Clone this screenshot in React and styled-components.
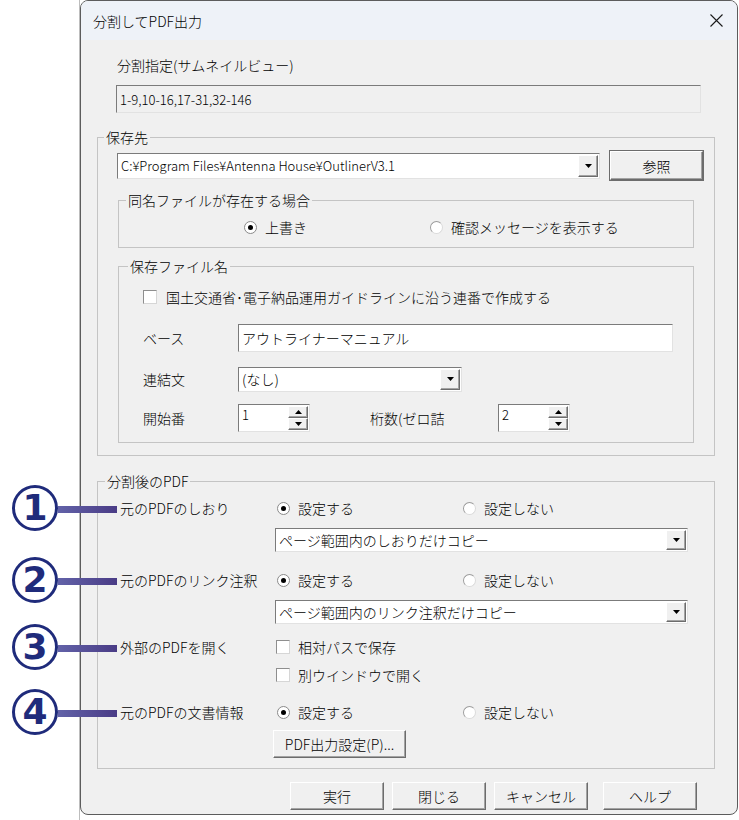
import styled, { createGlobalStyle } from 'styled-components';

const GlobalStyle = createGlobalStyle`
  html, body {
    margin: 0;
    padding: 0;
    background: #fff;
  }
  body {
    font-family: "Noto Sans CJK JP", "Noto Sans", sans-serif;
    font-size: 14px;
    font-weight: 300;
    color: #000;
  }
  * {
    box-sizing: border-box;
  }
`;

const Page = styled.div`
  display: flex;
  width: 739px;
  height: 820px;
`;

const Gutter = styled.div`
  width: 80px;
  flex-shrink: 0;
  border-right: 1px solid #bdbdbd;
`;

const Dialog = styled.div`
  width: 658px;
  align-self: flex-start;
  border: 1px solid #5c5c5c;
  border-radius: 8px;
  background: #f0f0f0;
  display: flex;
  flex-direction: column;
`;

const TitleBar = styled.div`
  height: 39px;
  background: #eef2f8;
  border-radius: 7px 7px 0 0;
  display: flex;
  align-items: center;
  justify-content: space-between;
  padding: 0 14px 0 12px;
  line-height: 20px;
`;

const Body = styled.div`
  padding: 15px 22px 4px 16px;
`;

const SectionLabel = styled.div`
  line-height: 20px;
  margin-left: 20px;
`;

const sunken = `
  border: 1px solid;
  border-color: #7b7b7b #e2e2e2 #e2e2e2 #7b7b7b;
`;

const raised = `
  border: 1px solid;
  border-color: #ffffff #6c6c6c #6c6c6c #ffffff;
  box-shadow: inset -1px -1px 0 #a3a3a3;
  background: #f0f0f0;
`;

const ReadonlyField = styled.div`
  ${sunken}
  margin: 10px 0 0 19px;
  width: 585px;
  height: 28px;
  background: #f0f0f0;
  font-size: 13px;
  padding-left: 3px;
  display: flex;
  align-items: center;
`;

const Group = styled.fieldset`
  margin: ${p => p.$mt || 0}px 0 0 ${p => p.$ml || 0}px;
  padding: 0;
  border: 1px solid #c4c4c4;
  min-width: 0;
`;

const Legend = styled.legend`
  margin-left: ${p => p.$ml}px;
  padding: 0 2px;
  line-height: 18px;
  font-size: 14px;
`;

const Inner = styled.div`
  padding: ${p => p.$pad};
`;

const Row = styled.div`
  display: flex;
  align-items: center;
  height: ${p => p.$h || 20}px;
  margin-top: ${p => p.$mt || 0}px;
  padding-left: ${p => p.$pl || 0}px;
  gap: ${p => p.$gap || 0}px;
`;

const TextBox = styled.div`
  ${sunken}
  width: ${p => p.$w}px;
  height: ${p => p.$h}px;
  background: #fff;
  font-size: ${p => p.$fs || 14}px;
  padding-left: 3px;
  display: flex;
  align-items: center;
  white-space: nowrap;
`;

const ComboBox = styled.div`
  ${sunken}
  width: ${p => (p.$w ? `${p.$w}px` : '100%')};
  height: ${p => p.$h}px;
  flex-shrink: 0;
  background: #fff;
  display: flex;
  align-items: stretch;
  padding: 1px;
`;

const ComboText = styled.div`
  flex: 1;
  padding-left: 2px;
  font-size: ${p => p.$fs || 14}px;
  display: flex;
  align-items: center;
  white-space: nowrap;
  overflow: hidden;
`;

const DropButton = styled.div`
  ${raised}
  width: 20px;
  display: flex;
  align-items: center;
  justify-content: center;
`;

const Spin = styled.div`
  ${sunken}
  width: 72px;
  height: 28px;
  background: #fff;
  display: flex;
  padding: 1px;
  flex-shrink: 0;
`;

const SpinText = styled.div`
  flex: 1;
  padding: 0 0 0 2px;
  font-size: 13px;
  line-height: 18px;
`;

const SpinButtons = styled.div`
  width: 20px;
  display: flex;
  flex-direction: column;
`;

const SpinHalf = styled.div`
  ${raised}
  flex: 1;
  display: flex;
  align-items: center;
  justify-content: center;
`;

const PushButton = styled.div`
  ${raised}
  width: ${p => p.$w}px;
  height: ${p => p.$h || 28}px;
  margin-left: ${p => p.$ml || 0}px;
  display: flex;
  align-items: center;
  justify-content: center;
  font-size: 14px;
  outline: ${p => (p.$default ? '1px solid #6c6c6c' : 'none')};
  flex-shrink: 0;
`;

const Option = styled.div`
  display: flex;
  align-items: center;
  gap: 8px;
  width: ${p => (p.$w ? `${p.$w}px` : 'auto')};
  line-height: 20px;
  white-space: nowrap;
`;

const RadioDot = styled.span`
  width: 13px;
  height: 13px;
  border-radius: 50%;
  border: 1px solid;
  border-color: ${p => (p.$on ? '#8a8a8a' : '#9c9c9c #dadada #dadada #9c9c9c')};
  background: #fff;
  display: flex;
  align-items: center;
  justify-content: center;
  flex-shrink: 0;

  &::after {
    content: '';
    width: 5px;
    height: 5px;
    border-radius: 50%;
    background: ${p => (p.$on ? '#000' : 'transparent')};
  }
`;

const CheckBox = styled.span`
  width: 14px;
  height: 14px;
  border: 1px solid;
  border-color: #8e8e8e #d6d6d6 #d6d6d6 #8e8e8e;
  background: #fff;
  flex-shrink: 0;
`;

const FieldLabel = styled.div`
  width: ${p => p.$w}px;
  flex-shrink: 0;
  line-height: 20px;
  white-space: nowrap;
`;

const Setting = styled.div`
  display: flex;
  margin-top: ${p => p.$mt || 0}px;
`;

const SettingLabel = styled.div`
  position: relative;
  width: 155px;
  height: 20px;
  flex-shrink: 0;
  line-height: 20px;
  white-space: nowrap;
`;

const Controls = styled.div`
  flex: 1;
  display: flex;
  flex-direction: column;
  gap: ${p => p.$gap}px;
`;

const Callout = styled.span`
  position: absolute;
  right: calc(100% + 3px);
  top: 50%;
  transform: translateY(-50%);
  display: flex;
  align-items: center;
`;

const Badge = styled.span`
  width: 46px;
  height: 46px;
  border: 3px solid #1f2b7b;
  border-radius: 50%;
  background: #fff;
  color: #1f2b7b;
  font-family: "DejaVu Sans", "Liberation Sans", sans-serif;
  font-weight: 700;
  font-size: 36px;
  line-height: 1;
  display: flex;
  align-items: center;
  justify-content: center;
`;

const Leader = styled.span`
  width: 59px;
  height: 7px;
  margin-top: 3px;
  background: linear-gradient(to right, #6262a8, #4a3c86);
`;

const ButtonBar = styled.div`
  display: flex;
  justify-content: flex-end;
  gap: 8px;
  margin-top: 13px;
  padding-right: 18px;
`;

function Arrow({ up }) {
  return (
    <svg width="7" height="4" viewBox="0 0 7 4">
      <path d={up ? 'M0 4 L3.5 0 L7 4 Z' : 'M0 0 L7 0 L3.5 4 Z'} fill="#000" />
    </svg>
  );
}

function Combo({ text, w, h = 24, fs }) {
  return (
    <ComboBox $w={w} $h={h}>
      <ComboText $fs={fs}>{text}</ComboText>
      <DropButton>
        <Arrow />
      </DropButton>
    </ComboBox>
  );
}

function SpinBox({ value }) {
  return (
    <Spin>
      <SpinText>{value}</SpinText>
      <SpinButtons>
        <SpinHalf><Arrow up /></SpinHalf>
        <SpinHalf><Arrow /></SpinHalf>
      </SpinButtons>
    </Spin>
  );
}

function Radio({ label, on, w }) {
  return (
    <Option $w={w}>
      <RadioDot $on={on} />
      {label}
    </Option>
  );
}

function Check({ label, gap }) {
  return (
    <Option style={{ gap }}>
      <CheckBox />
      {label}
    </Option>
  );
}

function Marker({ n }) {
  return (
    <Callout>
      <Badge>{n}</Badge>
      <Leader />
    </Callout>
  );
}

function RadioPair() {
  return (
    <Row $pl={2}>
      <Radio label="設定する" on w={186} />
      <Radio label="設定しない" />
    </Row>
  );
}

export default function App() {
  return (
    <>
      <GlobalStyle />
      <Page>
        <Gutter />
        <Dialog>
          <TitleBar>
            <span>分割してPDF出力</span>
            <svg width="13" height="13" viewBox="0 0 13 13">
              <path d="M0.5 0.5 L12.5 12.5 M12.5 0.5 L0.5 12.5" stroke="#1a1a1a" strokeWidth="1.1" />
            </svg>
          </TitleBar>
          <Body>
            <SectionLabel>分割指定(サムネイルビュー)</SectionLabel>
            <ReadonlyField>1-9,10-16,17-31,32-146</ReadonlyField>

            <Group $mt={15}>
              <Legend $ml={6}>保存先</Legend>
              <Inner $pad="5px 20px 12px 19px">
                <Row $h={29} $gap={10}>
                  <Combo text="C:¥Program Files¥Antenna House¥OutlinerV3.1" w={483} h={26} fs={13} />
                  <PushButton $w={93} $h={29} $default>参照</PushButton>
                </Row>

                <Group $mt={11} $ml={1}>
                  <Legend $ml={7}>同名ファイルが存在する場合</Legend>
                  <Inner $pad="8px 0 10px 125px">
                    <Row>
                      <Radio label="上書き" on w={186} />
                      <Radio label="確認メッセージを表示する" />
                    </Row>
                  </Inner>
                </Group>

                <Group $mt={9} $ml={1}>
                  <Legend $ml={9}>保存ファイル名</Legend>
                  <Inner $pad="12px 20px 10px 24px">
                    <Row>
                      <Check label="国土交通省･電子納品運用ガイドラインに沿う連番で作成する" gap={9} />
                    </Row>
                    <Row $h={28} $mt={17}>
                      <FieldLabel $w={95}>ベース</FieldLabel>
                      <TextBox $w={435} $h={28}>アウトライナーマニュアル</TextBox>
                    </Row>
                    <Row $h={26} $mt={14}>
                      <FieldLabel $w={95}>連結文</FieldLabel>
                      <Combo text="(なし)" w={224} h={25} />
                    </Row>
                    <Row $h={28} $mt={12}>
                      <FieldLabel $w={95}>開始番</FieldLabel>
                      <SpinBox value="1" />
                      <FieldLabel $w={128} style={{ marginLeft: 60 }}>桁数(ゼロ詰</FieldLabel>
                      <SpinBox value="2" />
                    </Row>
                  </Inner>
                </Group>
              </Inner>
            </Group>

            <Group $mt={16}>
              <Legend $ml={7}>分割後のPDF</Legend>
              <Inner $pad="8px 26px 10px 22px">
                <Setting>
                  <SettingLabel>
                    <Marker n="1" />
                    元のPDFのしおり
                  </SettingLabel>
                  <Controls $gap={10}>
                    <RadioPair />
                    <Combo text="ページ範囲内のしおりだけコピー" h={24} />
                  </Controls>
                </Setting>

                <Setting $mt={18}>
                  <SettingLabel>
                    <Marker n="2" />
                    元のPDFのリンク注釈
                  </SettingLabel>
                  <Controls $gap={10}>
                    <RadioPair />
                    <Combo text="ページ範囲内のリンク注釈だけコピー" h={24} />
                  </Controls>
                </Setting>

                <Setting $mt={13}>
                  <SettingLabel>
                    <Marker n="3" />
                    外部のPDFを開く
                  </SettingLabel>
                  <Controls $gap={8}>
                    <Row $pl={1}>
                      <Check label="相対パスで保存" gap={8} />
                    </Row>
                    <Row $pl={1}>
                      <Check label="別ウインドウで開く" gap={8} />
                    </Row>
                  </Controls>
                </Setting>

                <Setting $mt={17}>
                  <SettingLabel>
                    <Marker n="4" />
                    元のPDFの文書情報
                  </SettingLabel>
                  <Controls $gap={8}>
                    <RadioPair />
                    <PushButton $w={133} $ml={-2}>PDF出力設定(P)...</PushButton>
                  </Controls>
                </Setting>
              </Inner>
            </Group>

            <ButtonBar>
              <PushButton $w={94}>実行</PushButton>
              <PushButton $w={94}>閉じる</PushButton>
              <PushButton $w={94}>キャンセル</PushButton>
              <PushButton $w={94} $ml={7}>ヘルプ</PushButton>
            </ButtonBar>
          </Body>
        </Dialog>
      </Page>
    </>
  );
}
